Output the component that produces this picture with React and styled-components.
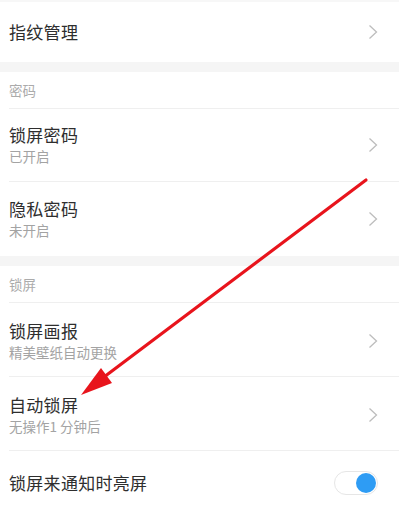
import styled, { createGlobalStyle } from "styled-components"

const Global = createGlobalStyle`
  * { box-sizing: border-box; }
  body {
    margin: 0;
    background: #fff;
    font-family: "Noto Sans CJK SC", "Noto Sans", sans-serif;
    overflow: hidden;
  }
`

const Page = styled.div`
  position: relative;
  width: 402px;
  height: 506px;
  overflow: hidden;
  background: #fff;
`
const List = styled.div`
  width: 399px;
  border-top: 2px solid #f7f7f7;
`
const Section = styled.div`
  padding-left: 9px;
`
const Gap = styled.div`
  height: 10px;
  background: #f5f5f5;
`
const Header = styled.div`
  height: 37px;
  display: flex;
  align-items: center;
  font-size: 13.5px;
  color: #ababab;
  border-bottom: 1px solid #efefef;
`
const Row = styled.div`
  display: flex;
  align-items: center;
  justify-content: space-between;
  height: ${(p) => p.h || 73}px;
  padding-top: ${(p) => p.pt || 0}px;
  padding-right: 21px;
  border-bottom: ${(p) => (p.last ? "none" : "1px solid #efefef")};
`
const Texts = styled.div`
  display: flex;
  flex-direction: column;
`
const Title = styled.div`
  font-size: 17px;
  line-height: 22px;
  color: #2e2e2e;
  letter-spacing: 0.3px;
`
const Sub = styled.div`
  font-size: 13.5px;
  line-height: 20px;
  color: #a3a3a3;
`
const Switch = styled.div`
  position: relative;
  width: 44px;
  height: 24px;
  border-radius: 12px;
  border: 1px solid #e6e6e6;
  background: #fff;
  &::after {
    content: "";
    position: absolute;
    right: 1px;
    top: 1px;
    width: 20px;
    height: 20px;
    border-radius: 50%;
    background: #2e9cf4;
  }
`
const Overlay = styled.svg`
  position: absolute;
  left: 0;
  top: 0;
  pointer-events: none;
`

const Chevron = () => (
  <svg width="10" height="16" viewBox="0 0 10 16">
    <path d="M1.5 1.5 L8.5 8 L1.5 14.5" fill="none" stroke="#bdbdbd" strokeWidth="1.3" />
  </svg>
)

const Item = ({ title, sub, h, pt, last }) => (
  <Row h={h} pt={pt} last={last}>
    <Texts>
      <Title>{title}</Title>
      {sub && <Sub>{sub}</Sub>}
    </Texts>
    <Chevron />
  </Row>
)

const App = () => {
  return (
    <Page>
      <Global />
      <List>
        <Section>
          <Item title="指纹管理" h={60} last />
        </Section>
        <Gap />
        <Section>
          <Header>密码</Header>
          <Item title="锁屏密码" sub="已开启" />
          <Item title="隐私密码" sub="未开启" h={74} last />
        </Section>
        <Gap />
        <Section>
          <Header>锁屏</Header>
          <Item title="锁屏画报" sub="精美壁纸自动更换" h={74} pt={3} />
          <Item title="自动锁屏" sub="无操作1 分钟后" h={74} pt={2} />
          <Row h={63} last>
            <Title>锁屏来通知时亮屏</Title>
            <Switch />
          </Row>
        </Section>
      </List>
      <Overlay width="402" height="506" viewBox="0 0 402 506">
        <line x1="366" y1="180" x2="104" y2="377" stroke="#e8141c" strokeWidth="3.2" strokeLinecap="round" />
        <polygon points="81,395 112,383 101,368" fill="#e8141c" />
      </Overlay>
    </Page>
  )
}

export default App
